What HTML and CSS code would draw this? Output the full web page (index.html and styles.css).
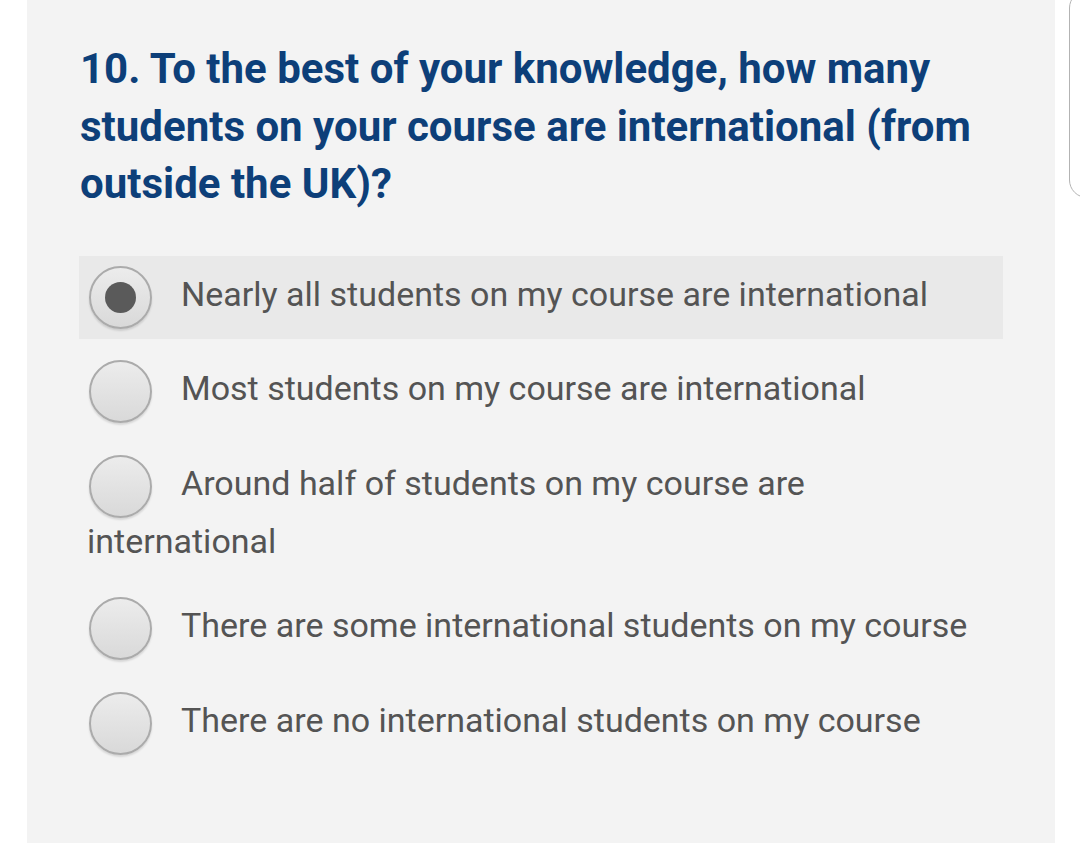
FILE: index.html
```html
<!DOCTYPE html>
<html lang="en">
<head>
<meta charset="utf-8">
<title>Survey question 10</title>
<link rel="stylesheet" href="styles.css">
</head>
<body>
<div class="panel">
  <h2 class="question">10. To the best of your knowledge, how many students on your course are international (from outside the UK)?</h2>
  <div class="options">
    <label class="option selected"><span class="radio"><span class="dot"></span></span>Nearly all students on my course are international</label>
    <label class="option"><span class="radio"></span>Most students on my course are international</label>
    <label class="option"><span class="radio"></span>Around half of students on my course are international</label>
    <label class="option"><span class="radio"></span>There are some international students on my course</label>
    <label class="option"><span class="radio"></span>There are no international students on my course</label>
  </div>
</div>
<div class="scroll-thumb"></div>
</body>
</html>
```

FILE: styles.css
```css
html, body {
  margin: 0;
  padding: 0;
  background: #ffffff;
  overflow: hidden;
  height: 843px;
}

.panel {
  margin-left: 27px;
  width: 1028px;
  height: 843px;
  box-sizing: border-box;
  background: #f3f3f3;
  padding: 40px 52px 0 52px;
}

.question {
  margin: 0 0 43px 1px;
  font-family: Roboto, "Liberation Sans", sans-serif;
  font-weight: 700;
  font-size: 42px;
  line-height: 57.5px;
  color: #0d3f79;
}

.options {
  display: flex;
  flex-direction: column;
  gap: 11.75px;
}

.option {
  display: block;
  padding: 10px 8px;
  font-family: Roboto, "Liberation Sans", sans-serif;
  font-size: 34px;
  line-height: 47px;
  color: #545454;
}

.option.selected {
  background: #e9e9e9;
}

.radio {
  display: inline-flex;
  align-items: center;
  justify-content: center;
  vertical-align: middle;
  width: 59px;
  height: 59px;
  margin: 0 29px 0 2px;
  border: 2px solid #ababab;
  border-radius: 50%;
  background: linear-gradient(#ececec, #d9d9d9);
  box-shadow: 0 2px 2px rgba(0, 0, 0, 0.12);
}

.dot {
  width: 31px;
  height: 31px;
  border-radius: 50%;
  background: #5a5a5a;
}

.scroll-thumb {
  position: fixed;
  top: -10px;
  left: 1069px;
  width: 40px;
  height: 208px;
  box-sizing: border-box;
  border: 1.5px solid #b3b3b3;
  border-radius: 18px;
}
```
